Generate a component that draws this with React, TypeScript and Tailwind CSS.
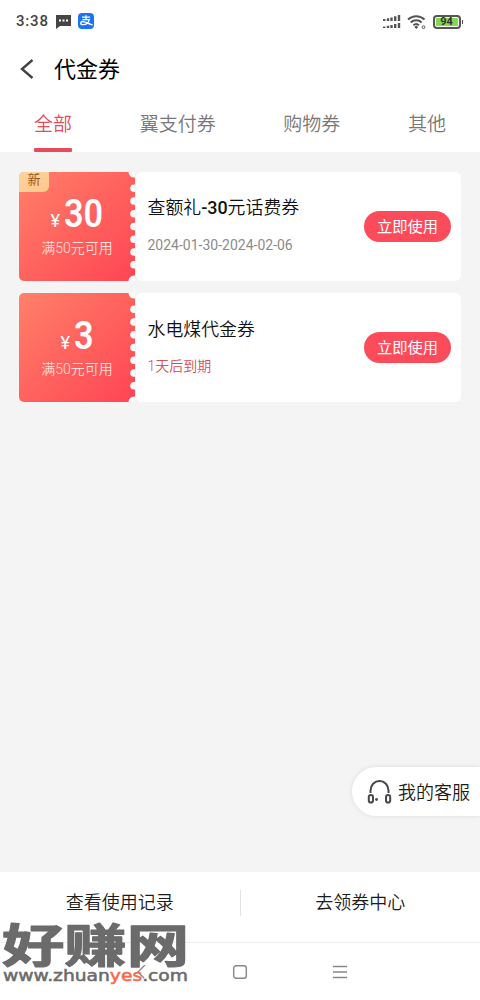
import clsx from "clsx";

const tabs = ["全部", "翼支付券", "购物券", "其他"];

const coupons = [
  {
    amount: "30",
    limit: "满50元可用",
    title: "查额礼-30元话费券",
    date: "2024-01-30-2024-02-06",
    isNew: true,
    expiring: false,
  },
  {
    amount: "3",
    limit: "满50元可用",
    title: "水电煤代金券",
    date: "1天后到期",
    isNew: false,
    expiring: true,
  },
];

function StatusBar() {
  return (
    <div className="flex h-[43px] items-center pl-4 pr-[17px]">
      <span className="w-[33px] whitespace-nowrap text-[15px] font-medium tracking-[0.8px] text-[#444]">3:38</span>
      <svg className="ml-[7px]" width="15" height="14" viewBox="0 0 15 14">
        <path d="M0 0h15v11H4l-4 3z" fill="#454545" />
        <path d="M3 4.5h2v2H3zM6.5 4.5h2v2h-2zM10 4.5h2v2h-2z" fill="#fff" />
      </svg>
      <svg className="mb-px ml-[7px]" width="16" height="16" viewBox="0 0 16 16">
        <rect width="16" height="16" rx="4" fill="#1a74f5" />
        <path
          d="M4 4.2h8M8 2.3v4.3M4.5 6.6h6.8C10.6 9.5 8 11.7 5 11.7c-3 0-3-3.2-.3-3.2 2.3 0 5 1.8 10 3.5"
          fill="none"
          stroke="#fff"
          strokeWidth="1.3"
        />
      </svg>
      <div className="ml-auto flex items-center">
        <svg width="20" height="16" viewBox="0 0 20 16" stroke="#555" strokeWidth="2.4">
          <path d="M2.2 5v2M6 4.2v2.8M9.5 3.4v3.6M13.2 2.2v4.8M17 1v6M2.2 12.5v1.5M6 11.7v2.3M9.5 10.9v3.1M13.2 10v4M17 9v5" />
        </svg>
        <svg className="ml-[5px]" width="20" height="16" viewBox="0 0 20 16" fill="none" stroke="#555" strokeWidth="2">
          <path d="M1 5.5a12 12 0 0 1 16.5 0M3.7 8.5a8 8 0 0 1 11 0M6.4 11.2a4.2 4.2 0 0 1 5.6 0" />
          <path d="M7.3 13l2-1.6 2 1.6-2 2z" fill="#555" stroke="none" />
          <circle cx="16.5" cy="13.2" r="1.4" strokeWidth="1" />
        </svg>
        <div className="ml-[6px] flex h-[14px] w-[28px] items-center justify-center rounded-[4px] border-2 border-[#555] p-px">
          <span className="flex h-full w-full items-center justify-center rounded-[1px] bg-[#82d94f] text-[11px] font-bold leading-none text-[#333]">
            94
          </span>
        </div>
        <span className="ml-px h-1 w-[1.5px] bg-[#555]" />
      </div>
    </div>
  );
}

function Header() {
  return (
    <div className="flex h-[52px] items-center pl-5">
      <svg width="14" height="20" viewBox="0 0 14 20" fill="none" stroke="#444" strokeWidth="2.4">
        <path d="M12.5 1L2 10l10.5 9" />
      </svg>
      <h1 className="ml-5 pt-px text-[22px] leading-none text-black">代金券</h1>
    </div>
  );
}

function Tabs() {
  return (
    <div className="flex h-[57px] justify-between px-[34px]">
      {tabs.map((tab, i) => (
        <button
          key={tab}
          className={clsx(
            "flex flex-col items-center justify-between pt-[14px] text-[19px] font-[350]",
            i === 0 ? "text-[#e34d5c]" : "text-[#787878]"
          )}
        >
          <span className="leading-8">{tab}</span>
          {i === 0 && <span className="h-1 w-full rounded-[1px] bg-[#e84a5b]" />}
        </button>
      ))}
    </div>
  );
}

function Perforation() {
  return (
    <svg className="absolute right-0 top-0" width="8" height="109" viewBox="0 0 8 109" fill="#f9f9f9">
      <circle cx="7" cy="0" r="5.5" />
      <circle cx="7" cy="109" r="5.5" />
      {[16.2, 29, 41.8, 54.5, 67.3, 80, 92.8].map((y) => (
        <circle key={y} cx="7" cy={y} r="3.8" />
      ))}
    </svg>
  );
}

function Coupon({ coupon }: { coupon: (typeof coupons)[number] }) {
  return (
    <li className="flex h-[109px]">
      <div className="relative flex w-[116px] flex-col items-center overflow-hidden rounded-l-[5px] bg-linear-[135deg,#ff806b,#ff6860_40%,#ff4554]">
        {coupon.isNew && (
          <span className="absolute left-0 top-0 flex h-[20px] w-[30px] justify-center rounded-br-[6px] bg-linear-to-br from-[#fbd3a0] to-[#ffc889] text-[13px] leading-[16px] text-[#9a5820]">
            新
          </span>
        )}
        <div className={clsx("flex h-[40px] items-baseline text-white", coupon.isNew ? "mt-[22px]" : "mt-[23px]")}>
          <span className="text-[18px] leading-10">¥</span>
          <span
            className={clsx(
              "ml-1 origin-left scale-x-90 text-[38px] font-semibold leading-10",
              coupon.amount.length > 1 ? "-mr-1" : "-mr-0.5"
            )}
          >
            {coupon.amount}
          </span>
        </div>
        <span className={clsx("text-[14px] font-[350] leading-5 text-[#ffdedc]", coupon.isNew ? "mt-[4px]" : "mt-[3px]")}>
          {coupon.limit}
        </span>
        <Perforation />
      </div>
      <div className="ml-px flex flex-1 items-center justify-between rounded-[6px] bg-white pl-[11.5px] pr-[10px]">
        <div className="flex h-full flex-col">
          <h2 className={clsx("text-[17.9px] font-[350] leading-7 text-[#111]", coupon.isNew ? "mt-[22px]" : "mt-[23px]")}>
            {coupon.title.split(/(-30)/).map((part) => (
              <span key={part} className={part === "-30" ? "font-medium" : undefined}>
                {part}
              </span>
            ))}
          </h2>
          <p
            className={clsx(
              "text-[14px] leading-5",
              coupon.expiring ? "mt-[12px] font-[350] text-[#d94c59]" : "mt-[13px] text-[#8c8c8c]"
            )}
          >
            {coupon.date}
          </p>
        </div>
        <button className="h-[31px] w-[87px] rounded-full bg-[#fc4c5b] pt-[3px] text-[15.3px] leading-none text-white">
          立即使用
        </button>
      </div>
    </li>
  );
}

function ServiceButton() {
  return (
    <button className="flex h-[49px] w-[128px] items-center rounded-l-full bg-white pl-[15px] text-[18px] font-[350] text-[#1c1c1c] shadow-[0_0_5px_rgba(0,0,0,0.1)]">
      <svg width="26" height="26" viewBox="0 0 26 26" fill="none" stroke="#484848" strokeWidth="2">
        <path d="M3.5 14v-2.5a9 9.5 0 0 1 18 0V14" />
        <rect x="1.8" y="16" width="4.2" height="7.5" rx="2.1" />
        <rect x="19" y="16" width="4.2" height="7.5" rx="2.1" />
        <circle cx="9.5" cy="20.5" r="1.4" fill="#484848" stroke="none" />
      </svg>
      <span className="ml-[5px] whitespace-nowrap pt-px">我的客服</span>
    </button>
  );
}

function Footer() {
  return (
    <footer className="flex h-[70px] items-center bg-white pb-[9px] text-[18px] font-[350] text-[#1c1c1c]">
      <button className="flex-1">查看使用记录</button>
      <span className="h-[26px] w-px bg-[#e2e2e2]" />
      <button className="flex-1">去领券中心</button>
    </footer>
  );
}

function NavBar() {
  return (
    <nav className="flex h-[58px] items-center justify-center gap-[86px] border-t border-[#eee] bg-white">
      <svg width="14" height="14" viewBox="0 0 14 14" fill="none" stroke="#888" strokeWidth="1.4">
        <path d="M12 0L5 7l6 6" />
      </svg>
      <svg width="14" height="14" viewBox="0 0 14 14" fill="none" stroke="#888" strokeWidth="1.4">
        <rect x="0.7" y="0.7" width="12.6" height="12.6" rx="2.5" />
      </svg>
      <svg width="14" height="14" viewBox="0 0 14 14" stroke="#888" strokeWidth="1.3">
        <path d="M0 1.5h14M0 7h14M0 12.5h14" />
      </svg>
    </nav>
  );
}

function Watermark() {
  return (
    <svg className="absolute bottom-0 left-0" width="192" height="86" viewBox="0 0 192 86" fill="#6b6b6b">
      <text
        x="2"
        y="47.5"
        textLength="187"
        lengthAdjust="spacingAndGlyphs"
        className="font-['Noto_Sans_CJK_SC',sans-serif] text-[46px] font-bold"
        stroke="#6b6b6b"
        strokeWidth="1.2"
        strokeLinejoin="round"
      >
        好赚网
      </text>
      <text
        x="3"
        y="67"
        textLength="185"
        lengthAdjust="spacingAndGlyphs"
        className="font-['DejaVu_Sans',sans-serif] text-[15px] font-normal"
        stroke="#6b6b6b"
        strokeWidth="0.5"
      >
        www.zhuan
        <tspan fill="#f5694c" stroke="#f5694c">
          yes
        </tspan>
        .com
      </text>
    </svg>
  );
}

export default function App() {
  return (
    <div className="relative flex h-[1000px] w-[480px] flex-col overflow-hidden bg-[#f4f4f4] font-[Roboto,'Noto_Sans_CJK_SC',sans-serif]">
      <header className="bg-white">
        <StatusBar />
        <Header />
        <Tabs />
      </header>
      <main className="flex flex-1 flex-col">
        <ul className="flex flex-col gap-3 pl-[19px] pr-[19px] pt-5">
          {coupons.map((coupon) => (
            <Coupon key={coupon.title} coupon={coupon} />
          ))}
        </ul>
        <div className="mb-[56px] mt-auto flex justify-end">
          <ServiceButton />
        </div>
      </main>
      <Footer />
      <NavBar />
      <Watermark />
    </div>
  );
}
